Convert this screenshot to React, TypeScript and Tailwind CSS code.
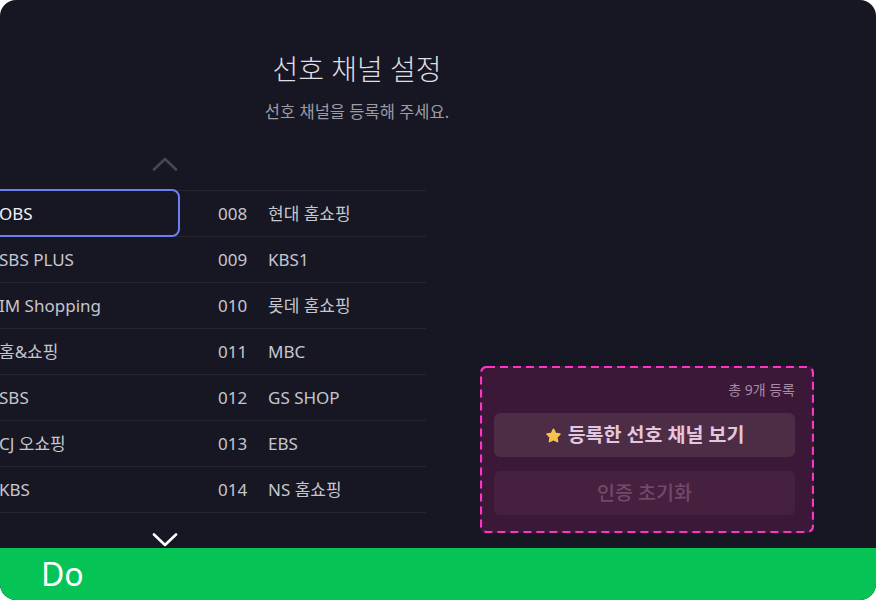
import React from "react";

const left = ["OBS", "SBS PLUS", "IM Shopping", "홈&쇼핑", "SBS", "CJ 오쇼핑", "KBS"];
const right: [string, string][] = [
  ["008", "현대 홈쇼핑"],
  ["009", "KBS1"],
  ["010", "롯데 홈쇼핑"],
  ["011", "MBC"],
  ["012", "GS SHOP"],
  ["013", "EBS"],
  ["014", "NS 홈쇼핑"],
];

const font = { fontFamily: '"Noto Sans", "Noto Sans CJK KR", sans-serif' };

function Chevron({ up, color }: { up?: boolean; color: string }) {
  return (
    <svg width="26" height="14" viewBox="0 0 26 14" fill="none">
      <path
        d={up ? "M2 12.5 L13 2 L24 12.5" : "M2 1.5 L13 12 L24 1.5"}
        stroke={color}
        strokeWidth="2.6"
        strokeLinecap="round"
        strokeLinejoin="round"
      />
    </svg>
  );
}

function Star() {
  return (
    <svg width="17" height="17" viewBox="0 0 24 24">
      <path
        d="M12 2.2c.5 0 .9.3 1.1.7l2.5 5.1 5.6.8c1 .1 1.4 1.3.6 2l-4 3.9 1 5.6c.2 1-.9 1.7-1.7 1.2L12 18.9l-5.1 2.6c-.9.5-1.9-.3-1.7-1.2l1-5.6-4-3.9c-.7-.7-.3-1.9.6-2l5.6-.8 2.5-5.1c.2-.4.6-.7 1.1-.7z"
        fill="#f7c24c"
      />
    </svg>
  );
}

export default function App() {
  return (
    <div className="w-[876px] h-[600px] bg-white" style={font}>
      <div className="w-full h-full rounded-2xl overflow-hidden bg-[#171723] flex flex-col">
        <div className="h-[548px] flex flex-col">
          <div className="w-[714px] text-center pt-[50px]">
            <div className="text-[28px] leading-[38px] font-light text-[#dedee3]">선호 채널 설정</div>
            <div className="mt-[12px] text-[16.5px] leading-6 text-[#9c9ca6]">선호 채널을 등록해 주세요.</div>
          </div>
          <div className="flex flex-1">
            <div className="w-[426px] flex flex-col">
              <div className="mt-[28px] mb-[14px] h-[24px] w-[330px] flex items-center justify-center">
                <Chevron up color="#474753" />
              </div>
              <div className="border-t border-[#262631]">
                {left.map((l, i) => (
                  <div key={i} className="h-[46px] flex border-b border-[#262631]">
                    <div className="relative w-[180px] flex items-center">
                      {i === 0 && (
                        <div className="absolute -left-[20px] right-0 -top-[2px] -bottom-[1px] border-2 border-[#6b7ff3] rounded-[8px]" />
                      )}
                      <span
                        className={
                          "-ml-[1px] text-[17px] whitespace-nowrap " +
                          (i === 0 ? "text-[#f3f3f7]" : "text-[#c6c6ce]")
                        }
                      >
                        {l}
                      </span>
                    </div>
                    <div className="flex items-center pl-[38px] text-[17px] text-[#c6c6ce]">
                      <span className="w-[50px]">{right[i][0]}</span>
                      <span className="whitespace-nowrap">{right[i][1]}</span>
                    </div>
                  </div>
                ))}
              </div>
              <div className="mt-[20px] w-[330px] flex justify-center">
                <Chevron color="#ffffff" />
              </div>
            </div>
            <div className="relative ml-[54px] w-[334px] self-end mb-[15px] rounded-[6px] bg-[#3b1838] pt-[14px] pb-[18px] pl-[14px] pr-[19px]">
              <svg className="absolute inset-0 pointer-events-none" width="334" height="167" viewBox="0 0 334 167">
                <rect
                  x="1"
                  y="1"
                  width="332"
                  height="165"
                  rx="6"
                  fill="none"
                  stroke="#ff34c6"
                  strokeWidth="2.2"
                  strokeDasharray="8 5"
                />
              </svg>
              <div className="text-right text-[14px] leading-5 text-[#a88ba5]">총 9개 등록</div>
              <button className="mt-[13px] w-full h-[44px] rounded-[6px] bg-[#4d2c45] flex items-center justify-center gap-[6px] text-[19.5px] font-semibold text-[#e3c7de]">
                <Star />
                <span>등록한 선호 채널 보기</span>
              </button>
              <button className="mt-[14px] w-full h-[44px] rounded-[6px] bg-[#46213f] flex items-center justify-center text-[19.5px] font-medium text-[#714a69]">
                인증 초기화
              </button>
            </div>
          </div>
        </div>
        <div className="h-[52px] bg-[#05c455] flex items-center pl-[41px] text-[32px] text-white">Do</div>
      </div>
    </div>
  );
}
